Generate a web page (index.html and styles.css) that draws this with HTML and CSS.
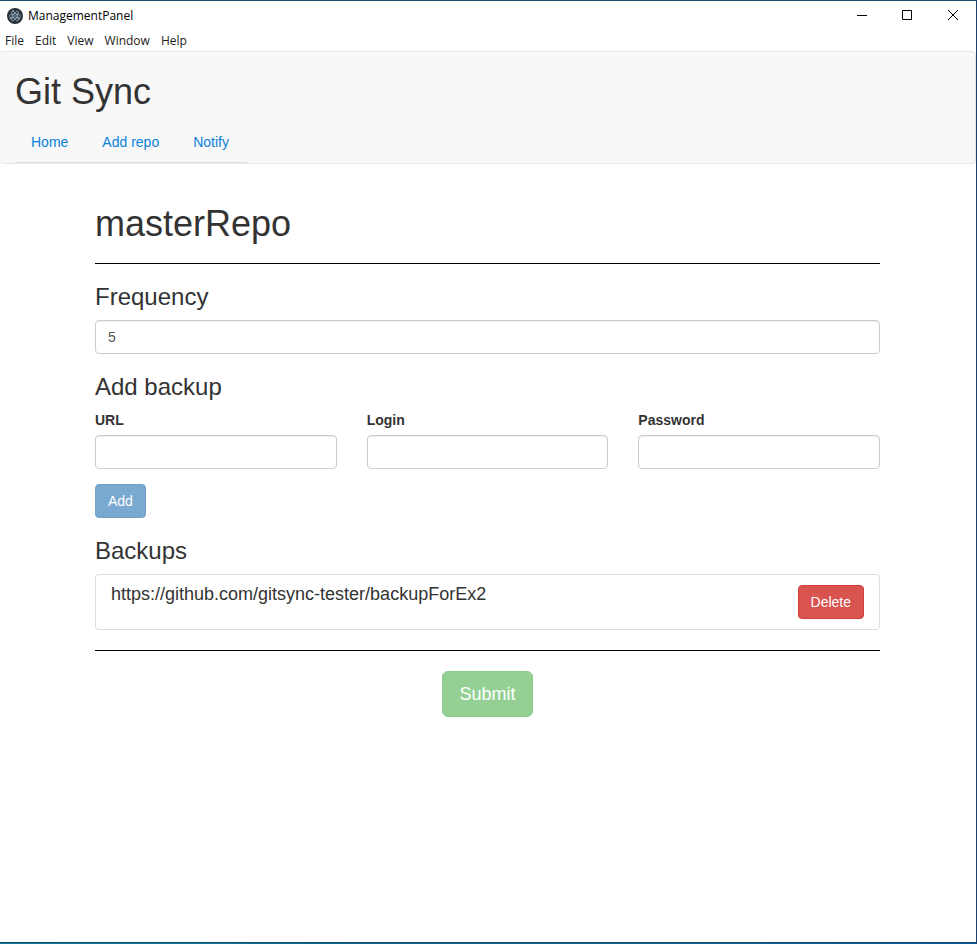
FILE: index.html
```
<!DOCTYPE html>
<html lang="en">
<head>
<meta charset="utf-8">
<title>ManagementPanel</title>
<link rel="stylesheet" href="styles.css">
</head>
<body>
<div class="window">
  <header class="titlebar">
    <svg class="app-icon" viewBox="0 0 16 16" aria-hidden="true">
      <circle cx="8" cy="8" r="8" fill="#2b2e3b"/>
      <g fill="none" stroke="#9cc3cd" stroke-width="0.7">
        <ellipse cx="8" cy="8" rx="5.6" ry="2.1"/>
        <ellipse cx="8" cy="8" rx="5.6" ry="2.1" transform="rotate(60 8 8)"/>
        <ellipse cx="8" cy="8" rx="5.6" ry="2.1" transform="rotate(120 8 8)"/>
      </g>
      <g fill="#9cc3cd">
        <circle cx="8" cy="8" r="0.8"/>
        <circle cx="3.4" cy="10.4" r="0.8"/>
        <circle cx="12.4" cy="10.6" r="0.8"/>
        <circle cx="6.2" cy="2.8" r="0.8"/>
      </g>
    </svg>
    <span class="app-title">ManagementPanel</span>
    <div class="window-controls">
      <button type="button" aria-label="Minimize"><svg viewBox="0 0 11 11"><path d="M1 5.5h10"/></svg></button>
      <button type="button" aria-label="Maximize"><svg viewBox="0 0 11 11"><path d="M.5 .5h9v9h-9z"/></svg></button>
      <button type="button" aria-label="Close"><svg viewBox="0 0 11 11"><path d="M0 0l10 10M10 0l-10 10"/></svg></button>
    </div>
  </header>
  <div class="menubar">
    <button type="button">File</button>
    <button type="button">Edit</button>
    <button type="button">View</button>
    <button type="button">Window</button>
    <button type="button">Help</button>
  </div>
  <nav class="navbar">
    <h1>Git Sync</h1>
    <ul class="tabs">
      <li><a href="#home">Home</a></li>
      <li><a href="#add">Add repo</a></li>
      <li><a href="#notify">Notify</a></li>
    </ul>
  </nav>
  <main class="content">
    <h1>masterRepo</h1>
    <hr>
    <form>
      <h3><label for="frequency">Frequency</label></h3>
      <input class="control" id="frequency" type="text" value="5">
      <h3>Add backup</h3>
      <div class="fields">
        <div class="field">
          <label for="url">URL</label>
          <input class="control" id="url" type="text">
        </div>
        <div class="field">
          <label for="login">Login</label>
          <input class="control" id="login" type="text">
        </div>
        <div class="field">
          <label for="password">Password</label>
          <input class="control" id="password" type="password">
        </div>
      </div>
      <button class="btn primary" type="button" disabled>Add</button>
      <h3>Backups</h3>
      <ul class="backups">
        <li>
          <h4>https://github.com/gitsync-tester/backupForEx2</h4>
          <button class="btn danger" type="button">Delete</button>
        </li>
      </ul>
      <hr>
      <div class="actions">
        <button class="btn success large" type="submit" disabled>Submit</button>
      </div>
    </form>
  </main>
</div>
</body>
</html>
```
FILE: styles.css
```
* { box-sizing: border-box; }

body {
  margin: 0;
  font: 14px/20px "Liberation Sans", Arial, sans-serif;
  color: #333;
  background: #fff;
}

.window {
  min-height: 100vh;
  border-top: 1px solid #1b4f72;
  border-right: 1px solid #1b3f66;
  background: linear-gradient(to right, #0f7a96, #0a5c9c) bottom / 100% 1px no-repeat,
    linear-gradient(#16495f, #16495f) bottom / 100% 2px no-repeat;
}

.titlebar {
  display: flex;
  align-items: center;
  height: 29px;
  padding-left: 7px;
  font: 12px/16px "Open Sans", sans-serif;
  color: #000;
}

.app-icon {
  width: 16px;
  height: 16px;
  margin-right: 5px;
}

.window-controls {
  display: flex;
  align-self: stretch;
  margin-left: auto;
}

.window-controls button {
  display: flex;
  align-items: center;
  justify-content: center;
  width: 46px;
  padding: 0;
  border: 0;
  background: none;
}

.window-controls svg {
  width: 11px;
  height: 11px;
  fill: none;
  stroke: #000;
}

.menubar {
  display: flex;
  gap: 11px;
  height: 21px;
  padding-left: 5px;
}

.menubar button {
  padding: 0;
  border: 0;
  background: none;
  font: 12px/20px "Open Sans", sans-serif;
  color: #222;
}

.navbar {
  padding: 0 15px;
  border: 1px solid #e7e7e7;
  border-left: 0;
  border-radius: 4px;
  background: #f8f8f8;
}

h1, h3, h4 {
  font-weight: 400;
  margin: 0;
}

h1 {
  margin: 20px 0 10px;
  font-size: 36px;
  line-height: 39px;
}

h3 {
  margin: 20px 0 10px;
  font-size: 24px;
  line-height: 26px;
}

h4 {
  font-size: 18px;
  line-height: 19px;
}

.navbar h1 { margin-top: 0; padding-top: 20px; }

.tabs {
  display: flex;
  width: max-content;
  margin: 0;
  padding: 0;
  list-style: none;
  border-bottom: 1px solid #ddd;
}

.tabs a {
  display: block;
  margin-right: 2px;
  padding: 11px 16px 10px;
  color: #0a80d8;
  text-decoration: none;
}

.content {
  padding: 20px 96px 20px 95px;
}

hr {
  margin: 20px 0;
  border: 0;
  border-top: 1px solid #000;
}

.control {
  display: block;
  width: 100%;
  height: 34px;
  padding: 6px 12px;
  border: 1px solid #ccc;
  border-radius: 4px;
  background: #fff;
  box-shadow: inset 0 1px 1px rgba(0, 0, 0, .075);
  font: inherit;
  color: #555;
}

.fields {
  display: grid;
  grid-template-columns: repeat(3, 1fr);
  gap: 30px;
  margin-bottom: 15px;
}

.field label {
  display: block;
  margin-bottom: 5px;
  font-weight: 700;
}

.btn {
  display: block;
  padding: 6px 12px;
  border: 1px solid;
  border-radius: 4px;
  font: inherit;
  color: #fff;
}

.btn:disabled { opacity: .65; }

.primary { background: #337ab7; border-color: #2e6da4; }
.danger { background: #d9534f; border-color: #d43f3a; }
.success { background: #5cb85c; border-color: #4cae4c; }

.large {
  padding: 10px 16px;
  border-radius: 6px;
  font-size: 18px;
  line-height: 24px;
}

.backups {
  margin: 0;
  padding: 0;
  list-style: none;
}

.backups li {
  display: flex;
  align-items: flex-start;
  justify-content: space-between;
  padding: 10px 15px;
  border: 1px solid #ddd;
  border-radius: 4px;
}

.actions {
  display: flex;
  justify-content: center;
}
```
